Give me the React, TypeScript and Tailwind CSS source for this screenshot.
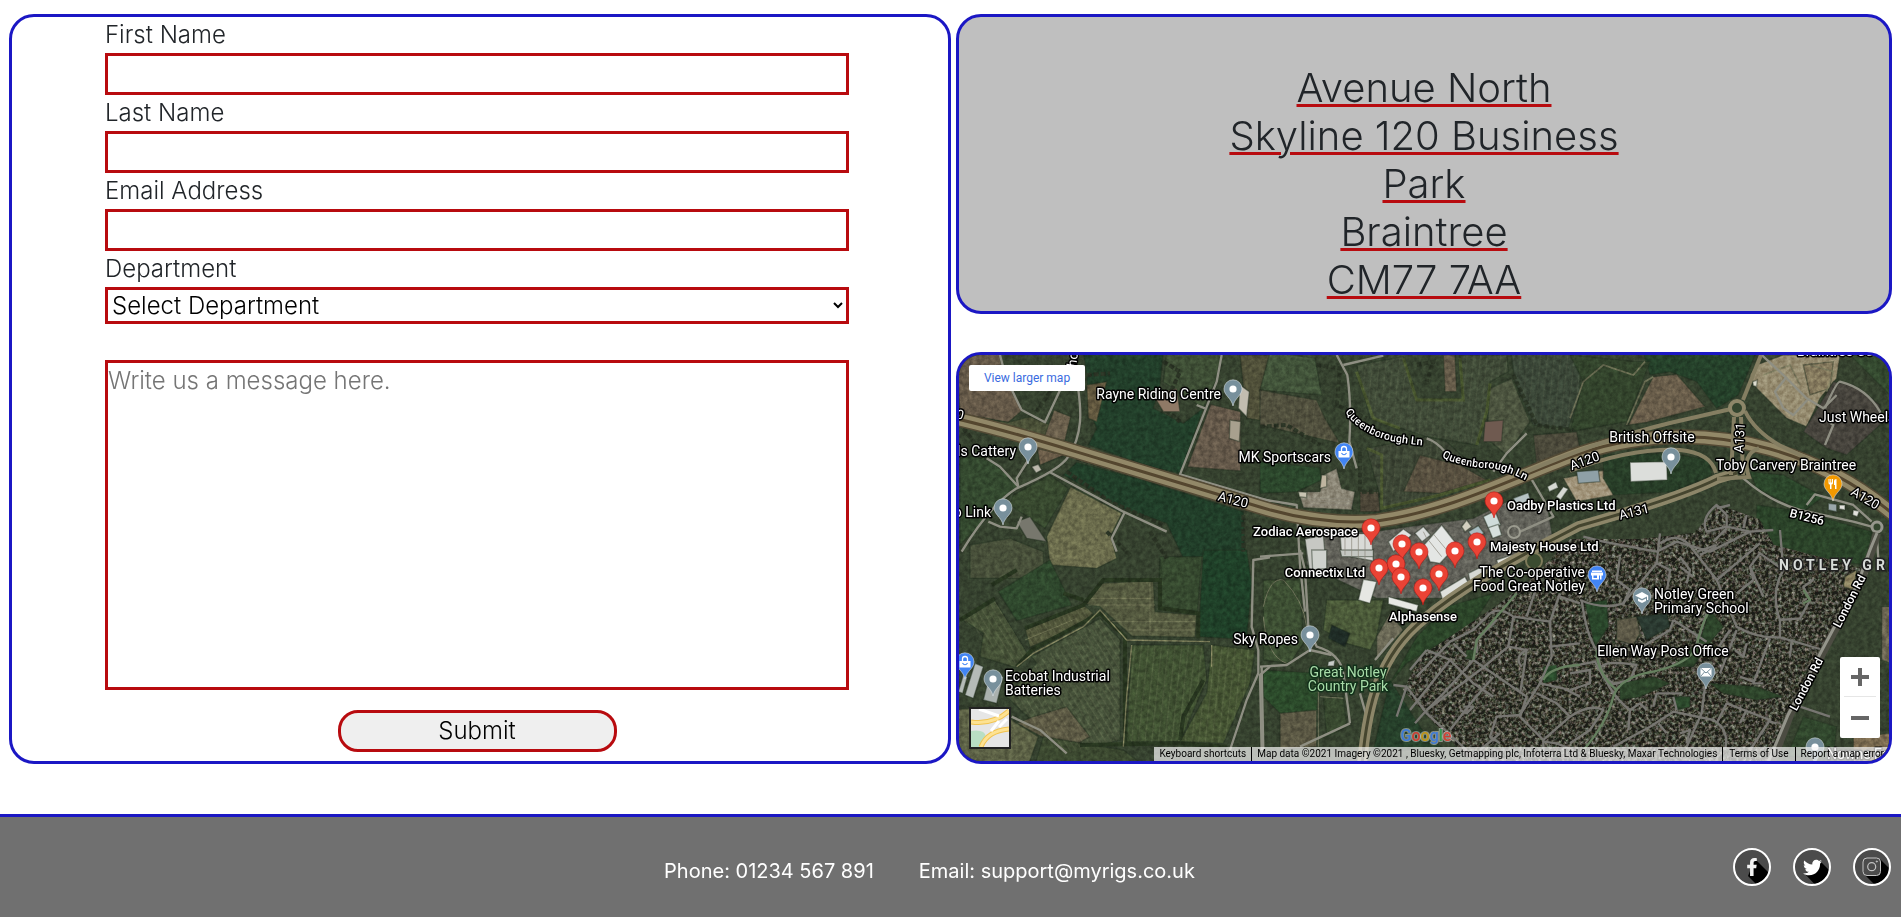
import React from "react";
import { FaFacebookF, FaTwitter } from "react-icons/fa";

type Tile = { x: number; y: number };
type Shape = [fill: string, points: string];

// Terrain is drawn at three units per map pixel, split into six tiles.
const NW: Tile = { x: -27, y: -30 };
const N: Tile = { x: 903, y: -30 };
const NE: Tile = { x: 1833, y: -30 };
const SW: Tile = { x: -27, y: 585 };
const S: Tile = { x: 903, y: 585 };
const SE: Tile = { x: 1833, y: 585 };

const fields: [Tile, Shape[]][] = [
  [NW, [
    ["#665a49", "20,20 148,20 155,70 190,150 218,195 175,232 30,205"],
    ["#4b5138", "30,215 175,232 240,215 300,240 280,290 30,215"],
    ["#223f2a", "400,20 640,20 630,120 610,190 700,235 760,190 690,385 600,365 415,300 440,250 415,190 410,90"],
    ["#3e4e35", "650,20 815,20 800,100 760,190 700,150 640,110"],
    ["#65594a", "782,178 872,200 872,378 712,366"],
    ["#51513a", "870,30 960,30 960,230 890,220"],
    ["#6a5f4c", "312,195 362,215 345,287 284,272"],
    ["#6c5e4a", "262,310 342,330 270,360"],
    ["#62583f", "410,120 470,110 440,230 415,220"],
    ["#213e29", "380,352 560,400 880,500 885,625 700,640 650,535 520,490 340,390"],
    ["#6c6d4d", "362,425 515,505 482,572 500,640 440,670 300,660 290,575"],
    ["#34492f", "30,340 100,330 210,420 130,500 30,600"],
    ["#38492f", "300,390 355,430 285,550 180,480 190,450"],
    ["#48503a", "60,600 180,580 280,620 280,700 60,700"],
    ["#3a4a32", "700,395 960,465 960,480 720,410"],
  ]],
  [N, [
    ["#42543a", "30,20 165,40 185,150 0,135"],
    ["#504f3d", "0,135 170,165 195,220 240,295 0,240"],
    ["#3f4a37", "290,60 430,35 470,165 610,160 600,30 740,30 745,80 690,110 680,200 650,300 500,275 330,220"],
    ["#655b49", "550,30 585,30 590,140 555,140"],
    ["#3a4637", "752,20 960,20 960,150 925,250 820,240 765,110"],
    ["#4d5540", "690,130 755,100 810,230 740,330 680,280"],
    ["#3c4534", "320,310 500,275 560,290 690,410 540,450 370,490"],
    ["#574f3f", "480,330 600,360 680,405 540,445 430,440"],
    ["#2c472c", "0,350 180,368 185,405 110,440 0,445"],
    ["#4c4a3b", "820,270 950,260 960,310 830,365"],
    ["#4b4537", "300,440 355,440 360,500 300,500"],
    ["#8c8777", "115,440 180,440 190,390 230,370 245,430 285,440 275,495 130,488"],
    ["#62625a", "135,560 340,560 480,540 640,520 740,470 860,470 880,590 720,660 560,760 350,760 140,660"],
    ["#a09379", "910,400 1060,370 1065,450 950,470"],
  ]],
  [NE, [
    ["#25412a", "220,20 560,20 505,150 440,190 380,110 300,80 240,90"],
    ["#33442c", "0,30 200,50 240,50 170,230 0,260 40,110"],
    ["#6a5e4b", "250,95 320,88 405,185 230,232 175,240"],
    ["#283e28", "100,330 300,325 420,345 425,390 310,440 130,450 100,400"],
    ["#968c70", "560,60 640,30 810,30 800,100 750,160 710,245 650,220 560,130 540,90"],
    ["#857a5e", "700,60 790,50 780,130 720,150"],
    ["#47443d", "790,110 850,120 930,180 930,240 830,330 770,310 700,260"],
    ["#2c462b", "540,380 640,390 760,455 700,500 560,430"],
    ["#2b4329", "700,500 905,560 890,660 560,620 560,480"],
    ["#34492f", "840,30 960,30 960,150"],
  ]],
  [SW, [
    ["#2f482d", "145,125 300,30 365,165 200,212"],
    ["#445036", "40,210 135,152 232,312 195,352 90,320 100,250"],
    ["#4f5439", "225,235 400,165 430,190 380,230 240,292"],
    ["#555a40", "400,160 450,100 610,92 615,185 740,195 735,262 545,258 450,170"],
    ["#36492f", "630,20 755,20 742,185 625,170"],
    ["#1f4028", "760,0 890,0 905,100 890,268 745,260"],
    ["#455139", "450,205 510,270 510,570 350,610 170,440 260,340 245,320"],
    ["#5b5843", "250,500 350,470 420,560 350,600 200,520"],
    ["#3f5031", "545,285 760,285 770,390 690,575 530,575"],
    ["#445332", "785,285 915,300 900,400 820,580 690,575 770,430"],
    ["#5d6246", "0,480 130,470 200,520 265,560 230,660 0,660"],
    ["#3c4930", "280,560 520,600 600,660 250,660"],
  ]],
  [S, [
    ["#3d4f33", "10,90 120,90 130,280 90,340 10,330"],
    ["#2c4b2b", "10,360 180,370 170,490 60,490 10,440"],
    ["#5b5844", "60,490 170,480 170,590 60,600"],
    ["#38482f", "190,440 250,440 260,530 200,560"],
    ["#4b5a39", "200,150 370,150 350,260 330,300 260,280 190,240"],
    ["#1f2c26", "215,225 270,250 255,290 205,265"],
    ["#6d6b58", "350,260 390,190 430,240 350,330"],
    ["#26402a", "390,390 500,560 560,600 340,600"],
    ["#2c4529", "470,260 560,170 700,130 640,220 440,340 390,400"],
  ]],
];

const later: [Tile, Shape[]][] = [
  [S, [
    ["#2b4b2c", "850,350 890,345 890,390 850,400"],
    ["#334a2e", "620,300 640,300 640,330 615,325"],
  ]],
  [SE, [
    ["#2a462b", "45,160 110,150 115,230 75,290"],
    ["#5f5b49", "140,210 200,200 210,250 190,285 140,270"],
    ["#2b3a31", "200,200 290,190 300,230 230,270"],
    ["#2c492c", "310,440 360,440 360,470 320,480"],
    ["#2e452b", "420,180 460,230 410,290 370,350 310,350 390,270"],
    ["#2e452b", "150,400 250,380 300,400 210,440 150,450"],
    ["#2e452b", "420,400 560,410 640,440 560,450 460,430"],
    ["#6c6653", "935,170 965,170 965,340 935,330"],
    ["#7b6b50", "850,560 965,550 965,640 850,640"],
    ["#31472d", "700,500 800,530 790,620 650,620"],
    ["#8c8361", "825,80 860,60 850,120 820,110"],
  ]],
];

const buildings: [Tile, Shape[]][] = [
  [NW, [
    ["#c2bdb0", "870,120 898,140 890,215 865,190"],
    ["#8f7966", "610,150 680,130 690,200 640,200"],
    ["#a8a08e", "840,225 872,230 868,290 838,280"],
    ["#bbb8ac", "245,365 265,358 275,375 258,384"],
    ["#77776d", "200,530 240,515 290,590 230,580"],
  ]],
  [N, [
    ["#c7c8c3", "135,582 190,570 200,680 150,690"],
    ["#d9dad6", "240,566 335,566 340,648 245,630"],
    ["#e2e3e0", "385,590 430,552 455,570 400,620"],
    ["#d8dbd9", "465,565 490,545 512,570 486,590"],
    ["#e4e6e4", "492,600 545,540 592,600 540,655 510,650"],
    ["#a9bcc0", "625,560 655,542 672,565 640,580"],
    ["#cfdcda", "670,515 705,498 722,540 685,550"],
    ["#d7e0dd", "685,548 715,538 725,570 698,580"],
    ["#d6d9d3", "862,425 888,410 895,428 868,440"],
    ["#d6d9d3", "910,425 925,432 902,465 888,455"],
    ["#b6c2c3", "760,460 805,443 812,468 770,480"],
    ["#d4d0c0", "605,545 620,525 635,545 615,560"],
    ["#bfb5a0", "185,390 200,390 200,425 180,430"],
    ["#c9c4b2", "115,440 140,442 140,458 118,455"],
    ["#6f5a50", "675,230 730,225 725,290 670,290"],
  ]],
  [NE, [
    ["#dcdedb", "180,352 290,350 292,405 182,410"],
    ["#8fa0a6", "20,380 85,375 90,410 25,415"],
    ["#9aa7aa", "775,475 800,478 800,500 775,495"],
    ["#e2e2dd", "808,480 825,480 825,495 808,492"],
    ["#e2e2dd", "850,495 868,498 862,515 848,510"],
    ["#deddd0", "548,110 562,105 560,125 550,122"],
  ]],
  [SW, [
    ["#b5bbb8", "75,340 100,350 70,445 45,435"],
    ["#b5bbb8", "40,375 52,380 38,430 25,425"],
    ["#aab1ae", "120,370 160,380 140,460 100,450"],
  ]],
  [S, [
    ["#cfd2cd", "155,0 200,0 200,55 158,60"],
    ["#c4c7c2", "240,0 340,0 340,20 245,20"],
    ["#e6e7e3", "310,88 350,95 330,160 295,150"],
    ["#e6e7e3", "385,140 475,165 470,185 385,162"],
    ["#dfe1dd", "540,125 615,80 625,98 548,150"],
    ["#d6d8d4", "625,70 665,50 672,75 630,95"],
    ["#e6e7e3", "710,30 755,15 762,38 715,48"],
    ["#c8ccc8", "205,335 225,330 222,348 203,348"],
  ]],
];

const lanes: [Tile, string[]][] = [
  [NW, [
    "M150,30 Q165,100 215,195 L285,232 L370,50 Q395,170 390,230 Q385,290 355,335 Q330,375 200,430 Q120,480 35,620",
    "M300,382 L520,500 L650,560",
    "M525,500 L485,580 L500,620",
    "M235,345 L200,400 L205,425",
    "M815,30 L800,110 L690,388 L960,468",
    "M765,190 L740,180",
    "M110,340 L150,365 L205,425",
    "M115,530 L150,545 L200,550 L215,515",
  ]],
  [N, [
    "M230,30 L262,90 Q275,180 268,290 L290,370",
    "M250,60 L370,32",
    "M500,280 Q530,290 555,320",
    "M800,265 L740,325 L700,380",
    "M0,462 L110,480 L120,660 L135,800",
    "M810,395 L860,480 L880,515 L780,560",
  ]],
  [NE, [
    "M575,30 L640,90 L710,160 L760,190 L800,150",
    "M650,95 L615,140 L640,190 L670,210 L712,165",
    "M765,190 Q800,110 810,110 Q890,130 930,200 L930,230",
    "M765,300 L790,240 L760,220",
    "M520,400 Q600,470 690,495 L850,530 L905,545",
    "M710,480 L735,448 L850,480 L905,530",
    "M920,565 L925,640",
  ]],
  [SW, [
    "M960,22 L910,30 L905,230 L925,300 L925,370 L890,450 L840,600",
    "M960,350 L930,375 L935,600",
    "M185,500 L270,540 L350,610",
  ]],
  [S, [
    "M120,0 L135,60 L145,230 L170,290 Q240,310 250,370 L265,480 L270,520",
    "M0,350 L80,345 L150,300 L215,315",
    "M270,520 L120,590",
    "M400,265 L345,330",
    "M300,430 L320,500 L310,590",
    "M5,350 L10,600",
    "M0,20 L130,10",
  ]],
];

const streets: [Tile, string[]][] = [
  [S, [
    "M690,190 L640,240 L570,275 L470,380",
    "M500,300 L570,330 L450,480",
    "M690,190 Q720,170 760,200 L870,215 L900,130",
    "M760,200 L745,290 L660,360 L500,480",
    "M650,310 L650,270 L710,210",
    "M640,330 L800,440 L780,500 L850,570",
    "M640,330 L560,420 L500,480",
    "M570,330 L640,400 L700,440",
    "M700,380 L640,450 L570,540",
    "M400,405 L440,410 L500,490 L620,600",
    "M440,410 L420,470 L410,500",
    "M500,480 L465,520",
    "M780,495 L710,500 L690,560 L720,580",
    "M780,495 L840,400 L875,320 L870,215",
    "M840,400 L910,415 L960,440",
    "M850,570 L930,500 L890,460 L830,430",
    "M785,350 Q760,320 800,300 L790,370 L780,430",
    "M745,290 L800,300",
    "M870,290 L960,280",
    "M830,110 L800,200",
    "M900,140 L960,160",
    "M580,280 L620,320",
    "M450,360 L500,300",
    "M610,470 L640,470 L620,490 L600,480",
    "M850,570 L850,610 M850,575 L890,580 L940,600",
    "M720,550 L660,600",
  ]],
  [SE, [
    "M30,150 Q100,180 160,160 L260,40 L270,-50",
    "M35,150 Q50,260 80,300 Q100,420 180,480 L175,540",
    "M160,160 L180,120 L140,90 L150,20",
    "M260,40 L300,60 L290,130 L320,190",
    "M330,20 L360,60 L350,100 M330,50 L370,80",
    "M270,-20 Q330,-60 370,0 L440,90 L500,230 Q560,265 630,262 L760,300",
    "M390,15 L440,-10 M440,90 L570,-20",
    "M630,262 L630,210 Q600,130 640,60 L630,-60 M640,60 L570,10 L540,50 L550,90",
    "M630,210 L690,205 L720,150 L700,110 L730,90",
    "M550,90 L500,130 M540,50 L580,140",
    "M600,265 L550,400 L580,400 M550,395 L510,380",
    "M665,270 L660,320 M530,280 L520,320 L495,300",
    "M500,240 L450,370",
    "M410,190 L380,280 L440,300 L480,240",
    "M310,210 L410,275 M310,210 L300,240 L200,300",
    "M0,350 L75,335 L100,380 L130,400",
    "M95,350 Q110,330 200,345 L180,390 L120,405",
    "M0,370 L60,360 L60,400 L0,420",
    "M0,500 Q60,460 100,480 L60,540 L0,580",
    "M130,590 L240,530 L310,485 L430,510 Q480,540 465,600",
    "M180,480 L210,460 L230,480 M260,430 L250,470 M260,430 L340,430 M310,440 L320,480",
    "M405,410 L395,490 L350,590",
    "M470,460 L440,520 M470,460 L600,510 L540,600",
    "M530,480 L510,520 M600,515 L620,520",
    "M690,470 L780,500",
    "M265,520 L290,550 M330,550 L360,540 L350,580",
  ]],
  [NE, [
    "M40,575 L100,590 L260,620 L320,590 L420,620 L540,560 L470,545 L410,560 Q390,520 440,480 L470,510 L470,545",
    "M440,490 L480,480 M530,510 L520,550 M540,560 L610,555 M380,620 L440,600",
    "M470,550 L430,590",
  ]],
];

const parkways: [Tile, string[]][] = [
  [SE, [
    "M420,180 Q390,230 380,290 Q360,340 250,365 Q150,380 130,440 Q110,520 40,600",
    "M80,300 Q80,370 140,420",
    "M700,120 L720,150 L700,160",
  ]],
  [S, ["M850,390 Q870,350 960,345", "M770,130 L650,270 L640,330"]],
];

function place(tile: Tile) {
  return `translate(${tile.x} ${tile.y})`;
}

function Shapes({ groups }: { groups: [Tile, Shape[]][] }) {
  return (
    <>
      {groups.map(([tile, shapes], g) => (
        <g key={g} transform={place(tile)}>
          {shapes.map(([fill, points], i) => (
            <polygon key={i} points={points} fill={fill} stroke="#222f20" strokeOpacity="0.45" strokeWidth="4" />
          ))}
        </g>
      ))}
    </>
  );
}

function Lines({ groups, color, width }: { groups: [Tile, string[]][]; color: string; width: number }) {
  return (
    <>
      {groups.map(([tile, paths], g) => (
        <g key={g} transform={place(tile)} fill="none" stroke={color} strokeWidth={width} strokeLinejoin="round">
          {paths.map((d) => (
            <path key={d} d={d} />
          ))}
        </g>
      ))}
    </>
  );
}

const a120 =
  "M-10,62 C60,78 100,92 158,109 L301,152 C340,164 380,169 418,166 C490,156 550,125 611,102 C670,80 740,74 811,94 C860,108 900,130 935,160";
const a131 =
  "M403,410 C408,350 420,300 465,264 C500,235 540,212 591,186 L620,171 C680,154 730,138 758,124 L778,118";
const slips = [
  "M560,120 Q640,85 711,68 L772,54",
  "M611,116 Q670,93 721,95 Q752,98 757,118",
  "M786,56 Q795,75 820,90 L850,104",
  "M772,120 L775,62 M784,120 L782,62",
  "M784,45 L802,0",
  "M758,124 L790,122 Q782,100 800,93",
];

function Terrain() {
  return (
    <>
      <defs>
        <filter id="grain" x="0" y="0" width="100%" height="100%" colorInterpolationFilters="sRGB">
          <feTurbulence type="fractalNoise" baseFrequency="0.22" numOctaves="4" seed="4" />
          <feColorMatrix values="1.7 0 0 0 -0.38  1.7 0 0 0 -0.38  1.7 0 0 0 -0.38  0 0 0 0 1" />
        </filter>
        <filter id="roofs" x="0" y="0" width="100%" height="100%" colorInterpolationFilters="sRGB">
          <feTurbulence type="fractalNoise" baseFrequency="0.3" numOctaves="3" seed="9" />
          <feColorMatrix values="1.8 0.2 0 0 -0.75  1.8 0 0.2 0 -0.75  1.8 0 0 0 -0.7  0 0 0 0 1" />
        </filter>
        <pattern id="furrows" width="15" height="15" patternUnits="userSpaceOnUse" patternTransform="rotate(-32)">
          <path d="M2 0V15" stroke="#a3a780" strokeOpacity="0.24" strokeWidth="2" />
        </pattern>
        <pattern id="rows" width="20" height="20" patternUnits="userSpaceOnUse" patternTransform="rotate(6)">
          <path d="M2 0V20" stroke="#a3a780" strokeOpacity="0.26" strokeWidth="2" />
        </pattern>
        <clipPath id="town">
          <path d="M444 335 461 302 531 255 566 230 611 184 680 184 735 178 760 150 800 164 815 190 911 215 864 295 808 410H515Z" />
        </clipPath>
      </defs>
      <rect width="930" height="406" fill="#36422f" />
      <g transform="scale(0.33333)">
        <Shapes groups={fields} />
        <g transform={place(SW)}>
          <path fill="url(#furrows)" d="M450,205 510,270 510,570 350,610 170,440 260,340ZM40,210 135,152 232,312 195,352ZM225,235 400,165 430,190 240,292Z" />
          <path fill="url(#rows)" d="M545,285H760L770,390 690,575H530ZM785,285 915,300 900,400 820,580H690L770,430Z" />
          <path fill="none" stroke="#94966e" strokeOpacity=".4" strokeWidth="3" d="M420,145H610M415,165H615M470,215H735M530,240H735M600,95V250M225,270 380,205" />
          <path fill="none" stroke="#27351f" strokeWidth="12" d="M30,210 135,145M200,350 245,300 450,190 525,260 525,580M225,235 400,165 460,90H630V175L745,190V265M200,60 125,105M340,130 400,150M760,390 700,500 690,570M390,585 690,580 830,590" />
          <path fill="none" stroke="#7c7d5a" strokeWidth="4" d="M200,350 250,310 400,230 450,180 530,270 780,275M545,285 530,440 520,590M785,285V350" />
        </g>
        <g transform={place(N)}>
          <path fill="url(#rows)" opacity=".6" d="M290,60 430,35 470,165H610V30H740L745,80 690,110 650,300 500,275 330,220ZM752,20H960V150L925,250 820,240ZM320,310 500,275 690,410 370,490ZM0,135 170,165 240,295 0,240Z" />
          <path fill="none" stroke="#53622f" strokeWidth="9" d="M290,80 340,220 420,250M430,40 470,165H610L600,40M320,310 365,330V490L540,450 690,405M690,115 680,200 650,300" opacity=".6" />
          <path fill="none" stroke="#2a3324" strokeWidth="12" strokeDasharray="14 7" d="M170,60 240,70 230,180 320,220M0,245 80,240 180,300M300,320V440H350M760,90 830,240 940,255M470,60 520,50 500,110" />
        </g>
        <g transform={place(NW)}>
          <path fill="none" stroke="#2a3324" strokeWidth="12" strokeDasharray="15 6" d="M220,60 320,110 260,200M410,90 480,85M350,380 480,470 640,540M380,340 550,390M640,50 690,80 640,190 690,230M40,250 110,340 30,320M880,510V620M600,560 650,640M470,560 540,630" />
        </g>
        <g transform={place(NE)}>
          <path fill="none" stroke="#77775b" strokeWidth="5" d="M0,220 40,110 100,60 190,90 225,50M170,240 225,110 250,95M720,60 790,80 770,140M580,90 660,60 690,120" opacity=".8" />
        </g>
        <g transform={place(S)} fill="none" stroke="#6d7058" strokeWidth="3">
          <path d="M10,170Q30,80 70,90Q130,150 140,230M10,200Q20,320 80,340M175,370V590M180,440 250,445" />
        </g>
      </g>
      <g clipPath="url(#town)">
        <rect x="430" y="145" width="500" height="265" fill="#3f4136" />
        <rect x="430" y="145" width="500" height="265" filter="url(#roofs)" opacity=".55" />
      </g>
      <g transform="scale(0.33333)">
        <Shapes groups={later} />
      </g>
      <rect width="930" height="406" filter="url(#grain)" opacity=".2" className="mix-blend-overlay" />
      <g transform="scale(0.33333)">
        <Lines groups={streets} color="#777671" width={7} />
        <Lines groups={parkways} color="#66805f" width={7} />
        <Shapes groups={buildings} />
        <g transform={place(N)} fill="none" stroke="#898579" strokeWidth="2">
          <path d="M255,566V630M275,566V635M295,566V640M315,566V645M505,585 545,635M520,567 560,615M155,460H275M150,470H275M150,480H275M490,560 500,580" />
        </g>
        <Lines groups={lanes} color="#8f8f83" width={7} />
      </g>
      <g fill="none">
        <path d={a120} stroke="#544a35" strokeWidth="15" />
        <path d={a120} stroke="#928868" strokeWidth="12" />
        <path d={a120} stroke="#54462f" strokeWidth="3" />
        <path d={a131} stroke="#8d8669" strokeWidth="10" />
        <path d={a131} stroke="#45452f" strokeWidth="3" />
        {slips.map((d) => (
          <path key={d} d={d} stroke="#857e62" strokeWidth="4" />
        ))}
        <circle cx="778" cy="53" r="7" fill="#34452f" stroke="#8d8669" strokeWidth="4" />
        <circle cx="918" cy="172" r="5" fill="#34452f" stroke="#96968c" strokeWidth="3" />
        <circle cx="555" cy="177" r="6" stroke="#9b9b8f" strokeWidth="2" />
        <circle cx="575" cy="206" r="8" fill="#3b4b30" stroke="#7f7b5b" strokeWidth="2" />
        <path d="M918 178 913 195 901 228 864 297 831 360 812 410" stroke="#4c4c42" strokeWidth="8" />
        <path d="M918 178 911 195 899 228 862 297 829 360 808 410" stroke="#94948a" strokeWidth="3" />
      </g>
    </>
  );
}

const labelStyle = "fill-white stroke-black stroke-[3px] [paint-order:stroke] [stroke-linejoin:round]";

type Anchor = "start" | "middle" | "end";
type Label = { x: number; y: number; text: string; anchor?: Anchor };

const placeLabels: Label[] = [
  { x: 262, y: 44, text: "Rayne Riding Centre", anchor: "end" },
  { x: 57, y: 101, text: "ls Cattery", anchor: "end" },
  { x: 32, y: 162, text: "o Link", anchor: "end" },
  { x: 372, y: 107, text: "MK Sportscars", anchor: "end" },
  { x: 339, y: 289, text: "Sky Ropes", anchor: "end" },
  { x: 46, y: 326, text: "Ecobat Industrial" },
  { x: 46, y: 340, text: "Batteries" },
  { x: 693, y: 87, text: "British Offsite", anchor: "middle" },
  { x: 827, y: 115, text: "Toby Carvery Braintree", anchor: "middle" },
  { x: 860, y: 67, text: "Just Wheels" },
  { x: 838, y: 1, text: "Braintree Co" },
  { x: 626, y: 222, text: "The Co-operative", anchor: "end" },
  { x: 626, y: 236, text: "Food Great Notley", anchor: "end" },
  { x: 695, y: 244, text: "Notley Green" },
  { x: 695, y: 258, text: "Primary School" },
  { x: 704, y: 301, text: "Ellen Way Post Office", anchor: "middle" },
  { x: 868, y: 404, text: "Nowne Fa" },
];

const resultLabels: Label[] = [
  { x: 399, y: 181, text: "Zodiac Aerospace", anchor: "end" },
  { x: 548, y: 155, text: "Oadby Plastics Ltd" },
  { x: 531, y: 196, text: "Majesty House Ltd" },
  { x: 406, y: 222, text: "Connectix Ltd", anchor: "end" },
  { x: 464, y: 266, text: "Alphasense", anchor: "middle" },
];

const roadLabels = [
  { x: 273, y: 149, angle: 14, text: "A120", bold: false },
  { x: 0, y: 64, angle: 14, text: "0", bold: false },
  { x: 627, y: 110, angle: -20, text: "A120", bold: false },
  { x: 676, y: 161, angle: -14, text: "A131", bold: false },
  { x: 785, y: 83, angle: -86, text: "A131", bold: false },
  { x: 904, y: 147, angle: 31, text: "A120", bold: false },
  { x: 847, y: 166, angle: 14, text: "B1256", bold: true },
  { x: 118, y: 5, angle: -82, text: "ho", bold: false },
  { x: 894, y: 248, angle: -63, text: "London Rd", bold: true },
  { x: 851, y: 331, angle: -62, text: "London Rd", bold: true },
];

type PinKind = "result" | "place" | "shop" | "food" | "school" | "post" | "store";

const pins: [PinKind, number, number][] = [
  ["place", 274, 34], ["place", 69, 92], ["place", 44, 153], ["place", 34, 324],
  ["place", 351, 280], ["place", 712, 102], ["place", 856, 392],
  ["school", 683, 242], ["post", 747, 317], ["shop", 385, 97], ["shop", 6, 307],
  ["store", 638, 220], ["food", 874, 129],
  ["result", 535, 146], ["result", 412, 173], ["result", 443, 189], ["result", 518, 187],
  ["result", 496, 196], ["result", 460, 197], ["result", 437, 209], ["result", 420, 213],
  ["result", 480, 219], ["result", 442, 222], ["result", 464, 233],
];

const pinColors: Record<PinKind, string> = {
  result: "#ea4335", place: "#78909c", school: "#78909c", post: "#78909c",
  shop: "#4285f4", store: "#4285f4", food: "#f29900",
};

function PinGlyph({ kind }: { kind: PinKind }) {
  switch (kind) {
    case "shop":
      return (
        <g fill="none" stroke="#fff">
          <path d="M-5.500-1H5.500V5.500H-5.500Z" fill="#fff" stroke="none" />
          <path d="M-2.500-1V-3A2.500 2.500 0 0 1 2.500-3V-1" strokeWidth="1.300" />
          <path d="M-2.500 1Q0 4.500 2.500 1" stroke="#4285f4" strokeWidth="1.200" />
        </g>
      );
    case "store":
      return (
        <path d="M-5-4.500H5V-3H-5ZM-6-2.500H6V.5H4.500V4.500H-5V.5H-6ZM-3.500.5V3H0V.5ZM2 .5V4.500H3V.5Z" fill="#fff" fillRule="evenodd" />
      );
    case "food":
      return <path d="M-4.500-5V-1Q-4.500.5-3 .5V5H-1.500V.5Q0 .5 0-1V-5H-1V-1.500H-1.800V-5H-2.700V-1.500H-3.500V-5ZM2 5V1H1V-3Q1-5 3.500-5V5Z" fill="#fff" />;
    case "school":
      return <path d="M0-5-7-1.500 0 2 5-.5V3H6.200V-1.500ZM-4 1.500V4L0 6 4 4V1.500L0 3.500Z" fill="#fff" />;
    case "post":
      return (
        <g>
          <rect x="-5.500" y="-4" width="11" height="8.500" fill="#fff" />
          <path d="M-5.500-4 0 1 5.500-4M-5.500 4.500-1.500 0M5.500 4.500 1.500 0" fill="none" stroke="#78909c" />
        </g>
      );
    default:
      return <circle r="3.600" fill="#fff" />;
  }
}

function Pin({ kind, x, y }: { kind: PinKind; x: number; y: number }) {
  const edge = kind === "result" ? "#b31412" : "#e0e6ea";
  return (
    <g transform={`translate(${x} ${y})`}>
      <path
        d="M0 17C-1.500 9-9 6.500-9-.2A9 9 0 0 1 9-.2C9 6.500 1.500 9 0 17Z"
        fill={pinColors[kind]}
        stroke={edge}
        strokeOpacity=".7"
        strokeWidth=".8"
      />
      <PinGlyph kind={kind} />
    </g>
  );
}

function MapPicture() {
  return (
    <svg
      viewBox="0 0 930 406"
      preserveAspectRatio="xMidYMid slice"
      className="absolute inset-0 h-full w-full font-[Roboto,sans-serif]"
      role="img"
      aria-label="Satellite map"
    >
      <Terrain />
      <g className={`${labelStyle} text-[14px]`}>
        {placeLabels.map((l) => (
          <text key={l.text} x={l.x} y={l.y} textAnchor={l.anchor}>{l.text}</text>
        ))}
      </g>
      <g className="fill-[#a8dba8] stroke-[#12301a] stroke-[3px] text-[14px] [paint-order:stroke]">
        <text x="389" y="322" textAnchor="middle">Great Notley</text>
        <text x="389" y="336" textAnchor="middle">Country Park</text>
      </g>
      {pins.map(([kind, x, y]) => (
        <Pin key={`${x}-${y}`} kind={kind} x={x} y={y} />
      ))}
      <g className={`${labelStyle} text-[13px] font-medium`}>
        {resultLabels.map((l) => (
          <text key={l.text} x={l.x} y={l.y} textAnchor={l.anchor}>{l.text}</text>
        ))}
      </g>
      <g className={`${labelStyle} text-[13px]`}>
        {roadLabels.map((l) => (
          <text
            key={`${l.x}-${l.y}`}
            textAnchor="middle"
            transform={`translate(${l.x} ${l.y}) rotate(${l.angle})`}
            className={l.bold ? "text-[12px] font-medium" : ""}
          >
            {l.text}
          </text>
        ))}
      </g>
      <defs>
        <path id="lane-west" d="M386 57Q400 78 432 86Q452 90 484 92" />
        <path id="lane-east" d="M483 102Q500 111 525 113Q548 113 580 133" />
      </defs>
      <g className={`${labelStyle} text-[11px] font-medium`}>
        <text><textPath href="#lane-west">Queenborough Ln</textPath></text>
        <text><textPath href="#lane-east">Queenborough Ln</textPath></text>
      </g>
      <text x="820" y="215" className="fill-[#d8dcd8] stroke-[#222] stroke-[3px] text-[14px] font-bold tracking-[4px] [paint-order:stroke]">
        NOTLEY GREEN
      </text>
      <text x="467" y="386" textAnchor="middle" opacity=".85" className="stroke-white/50 stroke-[2px] text-[16px] font-medium [paint-order:stroke]">
        <tspan fill="#4285f4">G</tspan>
        <tspan fill="#ea4335">o</tspan>
        <tspan fill="#d9a514">o</tspan>
        <tspan fill="#4285f4">g</tspan>
        <tspan fill="#34a853">l</tspan>
        <tspan fill="#ea4335">e</tspan>
      </text>
    </svg>
  );
}

function MapCard() {
  return (
    <section
      aria-label="Map"
      className="relative min-h-[412px] flex-1 overflow-hidden rounded-[25px] border-3 border-[#1b17c4] bg-[#35432f] font-[Roboto,sans-serif]"
    >
      <MapPicture />
      <a href="#map" className="absolute top-[10px] left-[10px] flex h-[26px] w-[116px] items-center justify-center rounded-[2px] bg-white text-[12px] text-[#3a6be0]">
        View larger map
      </a>
      <button type="button" aria-label="Show street map" className="absolute bottom-[12px] left-[10px] size-[42px] border-2 border-[#222] bg-[#e6e6e6]">
        <svg viewBox="0 0 38 38" className="h-full w-full">
          <path d="M0 22Q14 20 15 28L10 38H0Z" fill="#b9dfc4" />
          <path d="M0 13Q22 16 38 2M10 38Q16 22 38 20" fill="none" stroke="#f2c34e" strokeWidth="5" />
          <path d="M0 13Q22 16 38 2M10 38Q16 22 38 20" fill="none" stroke="#fde293" strokeWidth="3" />
          <path d="M8 0 28 7M28 18 36 10M20 22 28 12" fill="none" stroke="#fff" strokeWidth="3" />
        </svg>
      </button>
      <div className="absolute right-[9px] bottom-[23px] flex w-[40px] flex-col rounded-[2px] bg-white px-[4px]">
        <button type="button" aria-label="Zoom in" className="flex h-[40px] items-center justify-center border-b border-[#e6e6e6]">
          <svg viewBox="0 0 18 18" className="size-[18px]"><path d="M0 7H7V0H11V7H18V11H11V18H7V11H0Z" fill="#666" /></svg>
        </button>
        <button type="button" aria-label="Zoom out" className="flex h-[41px] items-center justify-center">
          <svg viewBox="0 0 18 18" className="size-[18px]"><path d="M0 7H18V11H0Z" fill="#666" /></svg>
        </button>
      </div>
      <div className="absolute right-0 bottom-0 flex h-[14px] items-center divide-x divide-black bg-[#f5f5f5]/70 text-[10px] leading-[14px] whitespace-nowrap text-black">
        <button type="button" className="px-[5px]">Keyboard shortcuts</button>
        <span className="px-[5px]">Map data ©2021 Imagery ©2021 , Bluesky, Getmapping plc, Infoterra Ltd &amp; Bluesky, Maxar Technologies</span>
        <a href="#terms" className="px-[6px]">Terms of Use</a>
        <a href="#report" className="px-[5px]">Report a map error</a>
      </div>
    </section>
  );
}

const textFields = [
  { id: "first-name", label: "First Name", type: "text" },
  { id: "last-name", label: "Last Name", type: "text" },
  { id: "email", label: "Email Address", type: "email" },
];

function ContactForm() {
  return (
    <form className="flex flex-col rounded-[25px] border-3 border-[#1b17c4] bg-white pr-[99px] pb-[9px] pl-[93px] text-[24px] leading-[36px] font-light text-[#212529]">
      {textFields.map((f) => (
        <React.Fragment key={f.id}>
          <label htmlFor={f.id}>{f.label}</label>
          <input id={f.id} type={f.type} className="h-[42px] border-3 border-[#b80b0f] px-[2px] text-black outline-none" />
        </React.Fragment>
      ))}
      <label htmlFor="department">Department</label>
      <select id="department" className="h-[37px] border-3 border-[#b80b0f] bg-white leading-[30px] text-black outline-none">
        <option>Select Department</option>
        <option>Sales</option>
        <option>Support</option>
      </select>
      <textarea
        aria-label="Message"
        placeholder="Write us a message here."
        className="mt-[36px] h-[330px] resize-none border-3 border-[#b80b0f] text-black outline-none placeholder:text-[#757575]"
      />
      <button type="submit" className="mt-[20px] h-[42px] w-[279px] self-center rounded-[20px] border-3 border-[#b80b0f] bg-[#efefef] text-black">
        Submit
      </button>
    </form>
  );
}

const addressLines = ["Avenue North", "Skyline 120 Business", "Park", "Braintree", "CM77 7AA"];

function AddressCard() {
  return (
    <address className="rounded-[25px] border-3 border-[#1b17c4] bg-[#bfbfbf] pt-[47px] pb-[7px] text-center text-[40px] leading-[48px] font-light text-[#212529] not-italic underline decoration-[#b80b0f] decoration-3">
      {addressLines.map((line) => (
        <p key={line}>{line}</p>
      ))}
    </address>
  );
}

function SocialBadge({ id, shadow, children }: { id: string; shadow: string; children: React.ReactNode }) {
  return (
    <svg viewBox="0 0 38 38" className="size-[38px]">
      <clipPath id={id}><circle cx="19" cy="19" r="17" /></clipPath>
      <circle cx="19" cy="19" r="18" fill="#4b4b4b" />
      <path d={shadow} clipPath={`url(#${id})`} fill="#000" />
      <circle cx="19" cy="19" r="18" fill="none" stroke="#fff" strokeWidth="2" />
      {children}
    </svg>
  );
}

function Footer() {
  return (
    <footer className="mt-[50px] grid grid-cols-[1fr_auto_1fr] items-center border-t-3 border-[#1b17c4] bg-[#707070] py-[31px] text-[20px] leading-[30px] text-white">
      <ul className="col-start-2 flex pt-2">
        <li className="pr-[45px]">Phone: 01234 567 891</li>
        <li className="pr-[42px]">Email: support@myrigs.co.uk</li>
      </ul>
      <nav aria-label="Social media" className="flex justify-end gap-[22px] pr-[10px]">
        <a href="#facebook" aria-label="Facebook">
          <SocialBadge id="badge-facebook" shadow="M22 11 40 29V40H27L15 28Z">
            <FaFacebookF x="10" y="10" size={18} color="#f2f2f2" />
          </SocialBadge>
        </a>
        <a href="#twitter" aria-label="Twitter">
          <SocialBadge id="badge-twitter" shadow="M27 13 42 28V42H27L12 26Z">
            <FaTwitter x="10" y="10" size={19} color="#fff" />
          </SocialBadge>
        </a>
        <a href="#instagram" aria-label="Instagram">
          <SocialBadge id="badge-instagram" shadow="M27 11 42 26V42H27L11 26 20 20Z">
            <g fill="none" stroke="#c4c4c4">
              <rect x="10" y="10" width="17.500" height="17.500" rx="4" fill="#4b4b4b" />
              <circle cx="18.700" cy="18.700" r="4" strokeWidth="1.200" />
              <circle cx="23.800" cy="13.500" r=".6" fill="#c4c4c4" />
            </g>
          </SocialBadge>
        </a>
      </nav>
    </footer>
  );
}

export default function App() {
  return (
    <div className="min-h-screen bg-white pt-[14px] font-[Inter,sans-serif]">
      <main className="grid grid-cols-[942fr_936fr] gap-[5px] px-[9px]">
        <ContactForm />
        <div className="flex flex-col gap-[38px]">
          <AddressCard />
          <MapCard />
        </div>
      </main>
      <Footer />
    </div>
  );
}
